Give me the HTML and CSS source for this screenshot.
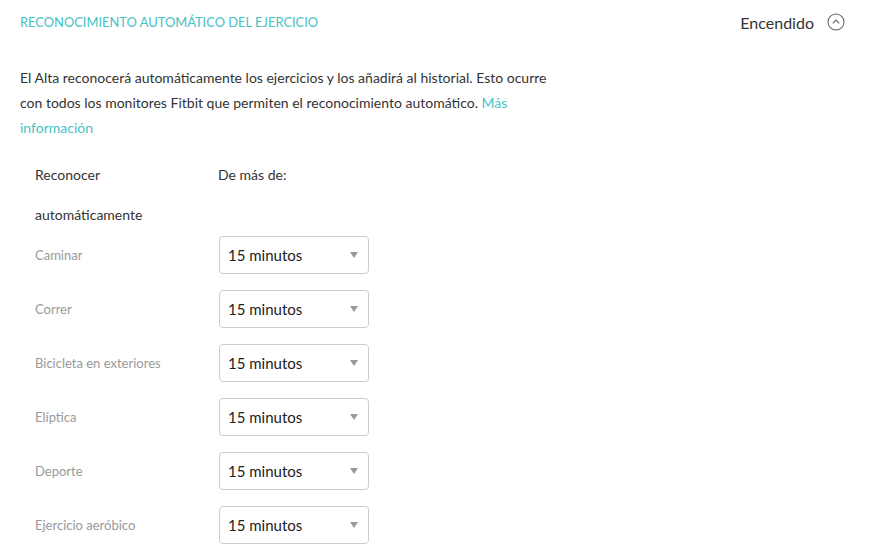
FILE: index.html
```html
<!DOCTYPE html>
<html lang="es">
<head>
  <meta charset="UTF-8" />
  <title>Reconocimiento automático del ejercicio</title>
  <meta name="viewport" content="width=device-width,initial-scale=1" />
  <link rel="stylesheet" href="styles.css">
</head>
<body>
  <div class="section">
    <div class="section-header">
      <h2>Reconocimiento automático del ejercicio</h2>
      <div class="status">
        <span>Encendido</span>
        <svg class="toggle" width="18" height="18" viewBox="0 0 18 18">
          <circle cx="9" cy="9" r="8" fill="none" stroke="#666" stroke-width="1.1" />
          <polyline points="5.8,10.4 9,7.2 12.2,10.4" fill="none" stroke="#666" stroke-width="1.2" />
        </svg>
      </div>
    </div>

    <p class="intro">
      El Alta reconocerá automáticamente los ejercicios y los añadirá al historial. Esto ocurre
      con todos los monitores Fitbit que permiten el reconocimiento automático. <a href="#">Más información</a>
    </p>

    <div class="settings">
      <div class="settings-head">
        <div class="col-label">Reconocer automáticamente</div>
        <div class="col-value">De más de:</div>
      </div>

      <div class="row">
        <div class="row-label">Caminar</div>
        <div class="select"><span>15 minutos</span><i class="arrow"></i></div>
      </div>
      <div class="row">
        <div class="row-label">Correr</div>
        <div class="select"><span>15 minutos</span><i class="arrow"></i></div>
      </div>
      <div class="row">
        <div class="row-label">Bicicleta en exteriores</div>
        <div class="select"><span>15 minutos</span><i class="arrow"></i></div>
      </div>
      <div class="row">
        <div class="row-label">Elíptica</div>
        <div class="select"><span>15 minutos</span><i class="arrow"></i></div>
      </div>
      <div class="row">
        <div class="row-label">Deporte</div>
        <div class="select"><span>15 minutos</span><i class="arrow"></i></div>
      </div>
      <div class="row">
        <div class="row-label">Ejercicio aeróbico</div>
        <div class="select"><span>15 minutos</span><i class="arrow"></i></div>
      </div>
    </div>
  </div>
</body>
</html>
```

FILE: styles.css
```css
:root {
  --teal: #47c2c5;
  --text: #333;
  --muted: #999;
  --border: #ccc;
}
body {
  margin: 0;
  background: #fff;
  font-family: Lato, 'Open Sans', Arial, sans-serif;
  color: var(--text);
}
.section {
  padding: 0 20px;
}
.section-header {
  display: flex;
  align-items: center;
  justify-content: space-between;
  height: 44px;
}
.section-header h2 {
  margin: 0;
  font-size: 12.9px;
  font-weight: 400;
  text-transform: uppercase;
  color: var(--teal);
  letter-spacing: 0;
}
.status {
  display: flex;
  align-items: center;
  gap: 13px;
  font-size: 16px;
  color: var(--text);
  padding-right: 5px;
}
.toggle {
  display: block;
}
.intro {
  margin: 21px 0 15px 0;
  max-width: 540px;
  font-size: 14px;
  line-height: 25px;
}
.intro a {
  color: var(--teal);
  text-decoration: none;
}
.settings {
  padding-left: 15px;
}
.settings-head {
  display: flex;
  font-size: 14px;
  line-height: 40px;
  margin-bottom: 1px;
}
.col-label {
  width: 120px;
  margin-right: 63px;
}
.row {
  display: flex;
  align-items: center;
  margin-bottom: 16px;
}
.row-label {
  width: 184px;
  font-size: 13px;
  color: var(--muted);
}
.select {
  width: 150px;
  height: 38px;
  box-sizing: border-box;
  border: 1px solid var(--border);
  border-radius: 4px;
  display: flex;
  align-items: center;
  justify-content: space-between;
  padding: 0 10px 0 8px;
  font-size: 15px;
  color: #222;
}
.arrow {
  width: 0;
  height: 0;
  border-left: 4px solid transparent;
  border-right: 4px solid transparent;
  border-top: 6px solid #999;
}
```
